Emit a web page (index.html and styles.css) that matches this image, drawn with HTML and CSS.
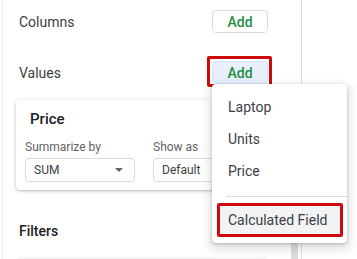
FILE: index.html
```html
<!DOCTYPE html>
<html lang="en">
<head>
    <meta charset="UTF-8">
    <meta name="viewport" content="width=device-width, initial-scale=1.0">
    <title>Pivot table editor</title>
    <link rel="stylesheet" href="styles.css">
</head>
<body>
    <div class="app">
        <aside class="sidebar">
            <div class="section-row">
                <span class="section-label">Columns</span>
                <button class="add-btn">Add</button>
            </div>

            <div class="section-row values-row">
                <span class="section-label">Values</span>
                <span class="mark">
                    <button class="add-btn active">Add</button>
                </span>
            </div>

            <div class="value-card">
                <div class="card-title">Price</div>
                <div class="card-fields">
                    <div class="field">
                        <label class="field-label">Summarize by</label>
                        <div class="select wide">
                            <span>SUM</span>
                            <span class="caret"></span>
                        </div>
                    </div>
                    <div class="field">
                        <label class="field-label">Show as</label>
                        <div class="select">
                            <span>Default</span>
                        </div>
                    </div>
                </div>
            </div>

            <div class="section-row filters-row">
                <span class="section-label strong">Filters</span>
            </div>

            <div class="value-card stub"></div>

            <div class="scroll-thumb"></div>
        </aside>

        <ul class="add-menu">
            <li class="menu-item">Laptop</li>
            <li class="menu-item">Units</li>
            <li class="menu-item">Price</li>
            <li class="menu-sep"></li>
            <li class="menu-item calc">Calculated Field</li>
        </ul>
    </div>
</body>
</html>
```

FILE: styles.css
```css
* {
    box-sizing: border-box;
}

body {
    margin: 0;
    background: #fff;
    font-family: Roboto, "Liberation Sans", Arial, sans-serif;
    color: #3c4043;
}

.app {
    position: relative;
    width: 357px;
    height: 259px;
    overflow: hidden;
}

.sidebar {
    position: relative;
    width: 300px;
    height: 259px;
    margin-left: 2px;
    padding: 10px 33px 0 13px;
    border-left: 1px solid #eceef1;
    border-right: 1px solid #dadce0;
    overflow: hidden;
}

.section-row {
    display: flex;
    align-items: center;
    justify-content: space-between;
    height: 23px;
    padding-left: 3px;
}

.section-label {
    font-size: 14px;
    color: #3c4043;
}

.section-label.strong {
    font-weight: 500;
    color: #202124;
}

.add-btn {
    display: block;
    width: 56px;
    height: 23px;
    padding: 0;
    border: 1px solid #dadce0;
    border-radius: 4px;
    background: #fff;
    color: #1e8e3e;
    font-family: Roboto, "Liberation Sans", Arial, sans-serif;
    font-size: 14px;
    font-weight: 500;
}

.add-btn.active {
    background: #e8f0fe;
    border-color: #d2e3fc;
}

.mark {
    display: block;
    margin: -5px -4px -3px -5px;
    padding: 2px 1px 0 2px;
    border: 3px solid #cc0a0a;
    border-radius: 2px;
}

.values-row {
    margin-top: 28px;
}

.value-card {
    margin-top: 16px;
    padding: 9px 10px 8px 9px;
    background: #fff;
    border-radius: 4px;
    box-shadow: 0 1px 2px rgba(60, 64, 67, 0.25), 0 1px 4px 1px rgba(60, 64, 67, 0.12);
}

.card-title {
    margin-left: 5px;
    font-size: 15px;
    font-weight: 500;
    line-height: 20px;
    color: #202124;
}

.card-fields {
    display: flex;
    gap: 18px;
    margin-top: 11px;
}

.field-label {
    display: block;
    margin-bottom: 4px;
    font-size: 12px;
    line-height: 14px;
    color: #5f6368;
}

.select {
    display: flex;
    align-items: center;
    justify-content: space-between;
    width: 110px;
    height: 24px;
    padding: 0 11px 0 8px;
    border: 1px solid #dadce0;
    border-radius: 4px;
    font-size: 12px;
    color: #3c4043;
}

.caret {
    width: 0;
    height: 0;
    border-left: 4px solid transparent;
    border-right: 4px solid transparent;
    border-top: 4px solid #5f6368;
}

.filters-row {
    margin-top: 29px;
}

.value-card.stub {
    margin-top: 17px;
    height: 40px;
}

.scroll-thumb {
    position: absolute;
    right: 3px;
    top: 200px;
    width: 7px;
    height: 70px;
    background: #dadce0;
}

.add-menu {
    position: absolute;
    left: 212px;
    top: 84px;
    width: 135px;
    margin: 0;
    padding: 7px 0 6px;
    list-style: none;
    background: #fff;
    border-radius: 4px;
    box-shadow: 0 1px 3px rgba(60, 64, 67, 0.3), 0 4px 8px 3px rgba(60, 64, 67, 0.15);
}

.menu-item {
    height: 32px;
    padding-left: 16px;
    font-size: 14px;
    line-height: 32px;
    color: #3c4043;
}

.menu-sep {
    height: 1px;
    margin: 9px 0 6px 14px;
    background: #dadce0;
}

.menu-item.calc {
    height: 34px;
    margin: 0 4px 0 5px;
    padding-left: 8px;
    line-height: 28px;
    background: #f1f3f4;
    border: 3px solid #cc0a0a;
    border-radius: 2px;
}
```
